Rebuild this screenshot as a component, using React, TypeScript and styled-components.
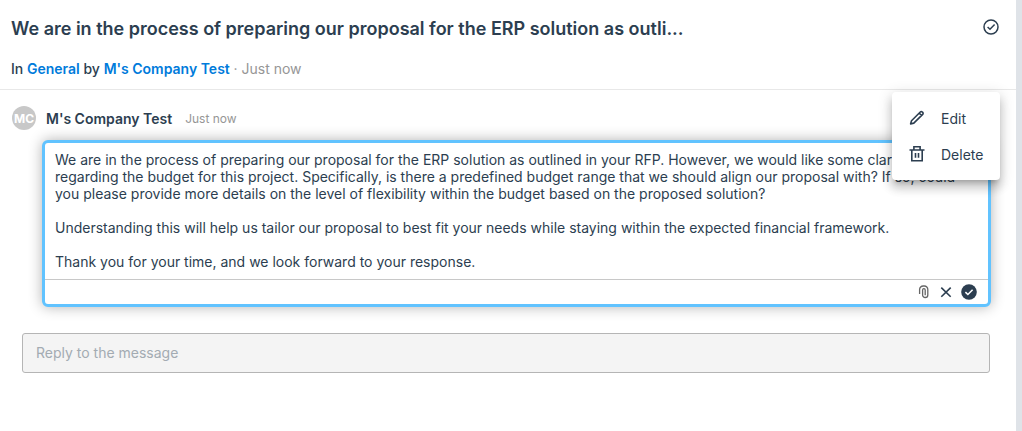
import React from "react";
import styled, { createGlobalStyle } from "styled-components";

const ink = "#2c3e50";
const blue = "#007bdb";
const grey = "#969696";

const GlobalStyle = createGlobalStyle`
  *, *::before, *::after { box-sizing: border-box; }
  body { margin: 0; background: #fff; color: ${ink}; font-family: Inter, "Liberation Sans", sans-serif; }
  h1, h2, p { margin: 0; }
  button, textarea, input { font: inherit; color: inherit; }
`;

const Page = styled.div`
  display: flex;
  min-height: 100vh;
`;

const Rail = styled.div`
  flex: none;
  width: 6px;
  background: #dfe3e8;
`;

const Main = styled.main`
  flex: 1;
  min-width: 0;
`;

const Header = styled.header`
  padding: 14px 16px 10px 11px;
  border-bottom: 1px solid #e8e8e8;
`;

const TitleRow = styled.div`
  display: flex;
  align-items: flex-start;
  justify-content: space-between;
`;

const Title = styled.h1`
  font-size: 18px;
  line-height: 29px;
  font-weight: 600;
`;

const IconButton = styled.button`
  display: inline-flex;
  padding: 4px 0;
  border: 0;
  background: none;
  cursor: pointer;
`;

const Meta = styled.p`
  margin-top: 16px;
  font-size: 14px;
  line-height: 20px;
  font-weight: 500;
`;

const MetaLink = styled.a`
  color: ${blue};
  font-weight: 600;
  text-decoration: none;
`;

const MetaTime = styled.span`
  color: ${grey};
  font-weight: 400;
`;

const Message = styled.article`
  position: relative;
  padding: 16px 25px 0 12px;
`;

const Author = styled.div`
  display: flex;
  align-items: center;
  height: 24px;
`;

const Avatar = styled.span`
  display: flex;
  align-items: center;
  justify-content: center;
  width: 24px;
  height: 24px;
  margin-right: 10px;
  border-radius: 50%;
  background: #c8c8c8;
  color: #fff;
  font-size: 12px;
  font-weight: 700;
`;

const AuthorName = styled.h2`
  padding-top: 2px;
  font-size: 14px;
  line-height: 22px;
  font-weight: 600;
`;

const AuthorTime = styled.span`
  margin-left: 13px;
  color: ${grey};
  font-size: 12px;
`;

const Editor = styled.form`
  margin: 10px 0 0 30px;
  border: 3px solid #61c3ff;
  border-radius: 6px;
  background: #fff;
  box-shadow: 0 0 14px rgba(0, 0, 0, 0.3);
`;

const EditorText = styled.textarea`
  display: block;
  width: 100%;
  height: 136px;
  padding: 8px 10px;
  border: 0;
  border-radius: 4px;
  outline: 0;
  background: none;
  resize: none;
  overflow: hidden;
  font-size: 14px;
  line-height: 17px;
`;

const Toolbar = styled.div`
  display: flex;
  align-items: center;
  justify-content: flex-end;
  gap: 7px;
  height: 25px;
  padding-right: 11px;
  border-top: 1px solid #c8c8c8;
`;

const Menu = styled.div`
  position: absolute;
  top: 2px;
  right: 16px;
  width: 108px;
  padding: 8px 0;
  border-radius: 4px;
  background: #fff;
  box-shadow: 0 5px 5px -3px rgba(0, 0, 0, 0.2), 0 8px 10px 1px rgba(0, 0, 0, 0.14),
    0 3px 14px 2px rgba(0, 0, 0, 0.12);
`;

const MenuItem = styled.button`
  display: flex;
  align-items: center;
  gap: 15px;
  width: 100%;
  height: 36px;
  padding: 0 16px;
  border: 0;
  background: none;
  font-size: 14px;
  cursor: pointer;
`;

const ReplyArea = styled.div`
  padding: 26px 26px 0 22px;
`;

const ReplyInput = styled.input`
  display: block;
  width: 100%;
  height: 40px;
  padding: 0 13px 2px;
  border: 1px solid #b5b5b5;
  border-radius: 3px;
  background: #f4f4f4;
  font-size: 14px;
  &::placeholder { color: #a3abb2; opacity: 1; }
`;

const Svg = styled.svg`
  display: block;
  flex: none;
  fill: none;
  stroke: currentColor;
`;

const CheckCircle = () => (
  <Svg width="18" height="18" viewBox="0 0 18 18" strokeWidth="1.5">
    <circle cx="9" cy="9" r="7" />
    <path d="M5.6 9 8 11.3 12.6 6.6" />
  </Svg>
);

const CheckSolid = () => (
  <Svg width="16" height="16" viewBox="0 0 16 16" strokeWidth="1.6">
    <circle cx="8" cy="8" r="7.8" fill={ink} stroke="none" />
    <path d="M4.4 8.1 6.9 10.5 11.6 5.8" stroke="#fff" />
  </Svg>
);

const Cross = () => (
  <Svg width="16" height="16" viewBox="0 0 16 16" strokeWidth="1.6">
    <path d="M3.3 3.6 12.7 12.8M12.7 3.6 3.3 12.8" />
  </Svg>
);

const Clip = () => (
  <Svg width="14" height="14" viewBox="0 0 14 14" strokeWidth="1.3">
    <path
      stroke="#666"
      d="M2.6 9V4.6A3.6 3.6 0 0 1 6.2 1h1.2A3.4 3.4 0 0 1 10.8 4.4v5.5a2.6 2.6 0 0 1-5.2 0V5a1.3 1.3 0 0 1 2.6 0v5.2"
    />
  </Svg>
);

const Pencil = () => (
  <Svg width="18" height="18" viewBox="0 0 18 18" strokeWidth="1.6" strokeLinejoin="round">
    <path d="M2.6 14.9 3.5 11.8 12.3 3a1.4 1.4 0 0 1 2 0l.4.4a1.4 1.4 0 0 1 0 2L5.8 14.1ZM11.2 4.1 13.6 6.5" />
  </Svg>
);

const Trash = () => (
  <Svg width="18" height="18" viewBox="0 0 18 18" strokeWidth="1.6">
    <path d="M1.5 5H16.5M3.8 5V15.8H14.2V5M5.9 5V1.8H12.1V5M7.5 8V12.7M10.5 8V12.7" />
  </Svg>
);

const messageText = `We are in the process of preparing our proposal for the ERP solution as outlined in your RFP. However, we would like some clarification regarding the budget for this project. Specifically, is there a predefined budget range that we should align our proposal with? If so, could you please provide more details on the level of flexibility within the budget based on the proposed solution?

Understanding this will help us tailor our proposal to best fit your needs while staying within the expected financial framework.

Thank you for your time, and we look forward to your response.`;

export default function App() {
  return (
    <Page>
      <GlobalStyle />
      <Main>
        <Header>
          <TitleRow>
            <Title>We are in the process of preparing our proposal for the ERP solution as outli...</Title>
            <IconButton type="button" aria-label="Mark as resolved">
              <CheckCircle />
            </IconButton>
          </TitleRow>
          <Meta>
            In <MetaLink href="#general">General</MetaLink> by{" "}
            <MetaLink href="#company">M's Company Test</MetaLink> <MetaTime>· Just now</MetaTime>
          </Meta>
        </Header>
        <Message>
          <Author>
            <Avatar>MC</Avatar>
            <AuthorName>M's Company Test</AuthorName>
            <AuthorTime>Just now</AuthorTime>
          </Author>
          <Editor onSubmit={(e) => e.preventDefault()}>
            <EditorText aria-label="Message" spellCheck={false} defaultValue={messageText} />
            <Toolbar>
              <IconButton type="button" aria-label="Attach a file">
                <Clip />
              </IconButton>
              <IconButton type="button" aria-label="Cancel">
                <Cross />
              </IconButton>
              <IconButton type="submit" aria-label="Save">
                <CheckSolid />
              </IconButton>
            </Toolbar>
          </Editor>
          <Menu>
            <MenuItem type="button">
              <Pencil />
              Edit
            </MenuItem>
            <MenuItem type="button">
              <Trash />
              Delete
            </MenuItem>
          </Menu>
        </Message>
        <ReplyArea>
          <ReplyInput type="text" aria-label="Reply" placeholder="Reply to the message" />
        </ReplyArea>
      </Main>
      <Rail />
    </Page>
  );
}
